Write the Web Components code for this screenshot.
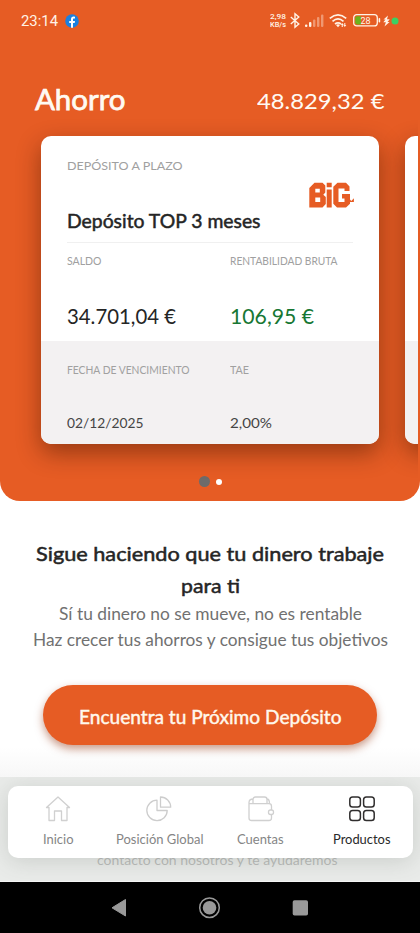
<!DOCTYPE html>
<html lang="es"><head><meta charset="utf-8"><title>Ahorro</title>
<style>
html,body{margin:0;padding:0;background:#fff}
body{width:420px;height:933px;overflow:hidden;font-family:Lato,"Open Sans",sans-serif;color:#252525}
</style></head><body>
<savings-app></savings-app>
<script>
const define=(name,html,after)=>{
  const t=document.createElement('template');t.innerHTML=html;
  customElements.define(name,class extends HTMLElement{
    connectedCallback(){
      if(this.shadowRoot)return;
      this.attachShadow({mode:'open'}).append(t.content.cloneNode(true));
      if(after)after(this,this.shadowRoot);
    }
  });
};

/* Single line of text: s = size, l = line height, w = set width, b = stroke weight */
define('fit-text',`<style>
:host{display:block;white-space:nowrap;width:max-content}
span{display:inline-block;transform-origin:0 50%}
</style><span><slot></slot></span>`,(el,r)=>{
  const a=n=>parseFloat(el.getAttribute(n));
  el.style.fontSize=a('s')+'px';el.style.lineHeight=a('l')+'px';el.style.height=a('l')+'px';
  if(el.hasAttribute('b'))el.style.webkitTextStroke=a('b')+'px currentColor';
  if(el.hasAttribute('w')){
    const sp=r.querySelector('span');
    sp.style.transform='scaleX('+a('w')/sp.getBoundingClientRect().width+')';
    el.style.width=a('w')+'px';
  }
});

define('status-bar',`<style>
:host{display:flex;height:40px;box-sizing:border-box;padding:1px 21px 0 21px;align-items:center;justify-content:space-between;color:#fff3e6;font-family:Roboto,sans-serif}
div{display:flex;align-items:center}
svg{display:block;overflow:visible}
.rate{margin-right:3px;text-align:center;font-weight:500}
</style>
<div><fit-text s="15" l="20" w="37">23:14</fit-text>
<svg style="margin-left:7px" width="14" height="14" viewBox="0 0 14 14"><circle cx="7" cy="7" r="6.800" fill="#1a80e0"/><path d="M6 13.800V9H4.200V7H6V5.400C6 3.500 7 2.600 8.600 2.600l1.400.1v1.700H9C8.200 4.400 8 4.800 8 5.500V7h2L9.700 9H8v4.800z" fill="#fff"/></svg></div>
<div>
<div class="rate" style="display:block"><fit-text s="8" l="7.500" w="16">2,98</fit-text><fit-text s="7.500" l="7.500" w="16">KB/s</fit-text></div>
<svg style="margin-left:1px" width="10" height="15" viewBox="0 0 10 15"><path d="M.8 4l8 7L5 14.300V.700L8.800 4l-8 7" fill="none" stroke="#fff3e6" stroke-width="1.400"/></svg>
<svg style="margin-left:5px" width="19" height="13" viewBox="0 0 19 13"><g fill="#fff3e6"><rect x="0" y="10.500" width="2.400" height="2.500" rx="1"/><rect x="4" y="8" width="2.400" height="5" rx="1"/><g opacity=".4"><rect x="8" y="5.500" width="2.400" height="7.500" rx="1"/><rect x="12" y="3" width="2.400" height="10" rx="1"/><rect x="16" y=".5" width="2.400" height="12.500" rx="1"/></g></g></svg>
<svg style="margin-left:5px" width="18" height="13" viewBox="0 0 18 13"><g fill="none" stroke="#fff3e6" stroke-width="1.700"><path d="M.8 4.300Q9-2.600 17.200 4.300M3.500 7.300Q9 2.600 14.500 7.300M6 10Q9 7.600 12 10"/></g><path d="M7 11q2-1.500 4 0L9 13.200zM13.200 9l1.600 2h-1v2h-1.100v-2h-1zm2.600 4l-1.500-2h1V9h1v2h1z" fill="#fff3e6"/></svg>
<svg style="margin-left:6px" width="28" height="13" viewBox="0 0 28 13"><rect x=".7" y=".7" width="23.600" height="11.200" rx="3" fill="none" stroke="#fff3e6" stroke-width="1.300"/><path d="M4 2.200h4v8.200H4A1.800 1.800 0 0 1 2.200 8.600V4A1.800 1.800 0 0 1 4 2.200z" fill="#6cb31c"/><rect x="25.600" y="4" width="1.600" height="4.500" rx=".8" fill="#fff3e6"/><text x="12.500" y="9.600" text-anchor="middle" font-size="9" font-family="Roboto" fill="#fff3e6">28</text></svg>
<svg style="margin-left:2px" width="7" height="12" viewBox="0 0 7 12"><path d="M5 .5L.5 4.500h2L.3 7.300h2.600L1.500 11.500 6.600 7H4.500l2.200-2.800H4z" fill="#fff3e6"/></svg>
<svg style="margin-left:1px" width="8" height="8" viewBox="0 0 8 8"><circle cx="4" cy="4" r="3.500" fill="#3bd163"/></svg>
</div>`);

define('bank-logo',`<style>:host{display:block;width:45px;height:26px}svg{display:block}</style>
<svg width="45" height="26" viewBox="0 0 45 26" fill="#e65c24"><path fill-rule="evenodd" d="M5.500 .8H13.500L16.300 3.500V10.500L14.300 12.700L16.800 15V22L13.500 25.500H.3V6zM6.300 6.800V10.500H10.800V6.800zM6.300 15.500V20H11.200V15.500z"/><path d="M17.700 .8h5v4.400h-5zM17.700 7.500h5V25.500h-5z"/><path d="M28.500 .8H37L40.500 4.500V9H35.500V6.500H29.500V20H35.500V16.500H33V12H41V17.500L42.300 19L44.900 16.300V20H41V21.800L37 25.500H28L24.300 21.800V4.800z"/></svg>`);

define('deposit-card',`<style>
:host{display:block;flex:none;width:338px;height:308px;border-radius:10px;background:#fff;box-shadow:0 9px 23px rgba(65,20,0,.48)}
.in{display:block;height:100%;border-radius:10px;overflow:hidden}
.head{display:flex;justify-content:space-between;margin:0 26px;height:106px;border-bottom:1px solid #f0f0f0}
.left{padding-top:22px;display:grid;gap:35px;align-content:start}
::slotted(bank-logo){margin-top:45.500px;margin-right:-1px}
.row{display:grid;grid-template-columns:163px 1fr;padding:0 26px;box-sizing:border-box}
.top{height:98px;padding-top:10.500px}.bottom{background:#f3f1f2;height:103px;padding-top:21.500px}
.cell{display:grid;align-content:start;gap:34px}.bottom .cell{gap:36.500px}
::slotted([slot^="l"]){color:#a0a0a0}
::slotted([slot=v2]){color:#177733}
::slotted([slot=v3]),::slotted([slot=v4]){color:#454545}
</style><div class="in"><div class="head"><div class="left"><slot name="l0"></slot><slot name="title"></slot></div><slot name="logo"></slot></div>
<div class="row top"><div class="cell"><slot name="l1"></slot><slot name="v1"></slot></div><div class="cell"><slot name="l2"></slot><slot name="v2"></slot></div></div>
<div class="row bottom"><div class="cell"><slot name="l3"></slot><slot name="v3"></slot></div><div class="cell"><slot name="l4"></slot><slot name="v4"></slot></div></div></div>`);

define('savings-hero',`<style>
:host{display:block;height:501px;background:#e65c24;border-radius:0 0 20px 20px;overflow:hidden}
.title{display:flex;justify-content:space-between;align-items:flex-start;padding:42px 36px 0 35px;height:54px;color:#fffaf2}
.amt{margin-top:2.500px}
.track{display:flex;gap:25.500px;padding-left:41px;width:378px;clip-path:inset(-30px 1px -60px 0)}
.dots{display:flex;align-items:center;justify-content:center;gap:6px;margin-top:32px;height:11px;padding-left:1px}
i{width:11px;height:11px;border-radius:50%;background:#6e6b6a}i+i{width:6px;height:6px;background:#fff}
</style><status-bar></status-bar>
<div class="title"><fit-text s="28.500" l="34" w="90.500" b=".75">Ahorro</fit-text><fit-text class="amt" s="22" l="32" w="127.500">48.829,32 €</fit-text></div>
<div class="track"><deposit-card>
<fit-text slot="l0" s="12.300" l="16" w="115.500">DEPÓSITO A PLAZO</fit-text>
<fit-text slot="title" s="19.500" l="24" w="193.500" b=".5">Depósito TOP 3 meses</fit-text><bank-logo slot="logo"></bank-logo>
<fit-text slot="l1" s="11" l="14" w="34.500">SALDO</fit-text><fit-text slot="v1" s="20.800" l="28" w="109">34.701,04 €</fit-text>
<fit-text slot="l2" s="11" l="14" w="107.500">RENTABILIDAD BRUTA</fit-text><fit-text slot="v2" s="20.800" l="28" w="84">106,95 €</fit-text>
<fit-text slot="l3" s="11" l="14" w="122.500">FECHA DE VENCIMIENTO</fit-text><fit-text slot="v3" s="14.300" l="20" w="76.500">02/12/2025</fit-text>
<fit-text slot="l4" s="11" l="14" w="19">TAE</fit-text><fit-text slot="v4" s="14.300" l="20" w="42">2,00%</fit-text>
</deposit-card><deposit-card></deposit-card></div>
<div class="dots"><i></i><i></i></div>`);

define('promo-panel',`<style>
:host{display:grid;justify-items:center;align-content:start;padding-top:40.500px;height:344.500px;color:#252525}
.sub{color:#717171}
button{all:unset;box-sizing:border-box;display:flex;align-items:center;justify-content:center;width:334px;height:60px;border-radius:30px;background:#e65c24;color:#fff8ec;margin-top:32px;padding-top:4px;box-shadow:0 4px 8px rgba(150,55,20,.5)}
.more{margin-top:102.500px;margin-left:14px;color:#6c6c6c}
</style>
<fit-text s="20" l="22" w="348" b=".5">Sigue haciendo que tu dinero trabaje</fit-text>
<fit-text style="margin-top:10px" s="20" l="22" w="59" b=".5">para ti</fit-text>
<fit-text style="margin-top:5.500px" class="sub" s="16.500" l="26" w="303">Sí tu dinero no se mueve, no es rentable</fit-text>
<fit-text class="sub" s="16.500" l="26" w="355">Haz crecer tus ahorros y consigue tus objetivos</fit-text>
<button><fit-text s="19" l="24" w="262.500" b=".45">Encuentra tu Próximo Depósito</fit-text></button>
<fit-text class="more" s="14" l="24" w="240.500">contacto con nosotros y te ayudaremos</fit-text>`);

define('nav-item',`<style>:host{display:grid;justify-items:center;align-content:start;padding-top:9px;gap:7.500px;color:#858585}
:host([active]){color:#292929}::slotted(svg){display:block;overflow:visible}</style><slot name="icon"></slot><slot></slot>`);

define('bottom-nav',`<style>
:host{display:block;position:absolute;left:0;right:0;bottom:51px;height:105px;overflow:hidden;background:rgba(222,225,222,.68);box-sizing:border-box;border-bottom:1px solid #f4f4f4}
nav{display:grid;grid-template-columns:repeat(4,101.250px);margin:9px 7.500px 0;width:405px;height:71.500px;border-radius:10px;background:#fff;box-shadow:0 3px 22px rgba(80,90,80,.2)}
</style><nav>
<nav-item><svg slot="icon" width="26" height="27" viewBox="0 0 26 27" fill="none" stroke="#d0d0d0" stroke-width="1.300" stroke-linejoin="round"><path d="M1.500 12.500L13 2 24.500 12.500H22V25.500H16.500V16H9.500V25.500H4V12.500z"/></svg><fit-text s="13" l="19" w="30.500">Inicio</fit-text></nav-item>
<nav-item><svg slot="icon" width="26" height="27" viewBox="0 0 26 27" fill="none" stroke="#cdcdcd" stroke-width="1.300" stroke-linejoin="round"><path d="M11 5.200A10.200 10.200 0 1 0 21.200 15.500H11zM14.500 2A10.200 10.200 0 0 1 24.700 12.200H14.500z"/></svg><fit-text s="13" l="19" w="87.500">Posición Global</fit-text></nav-item>
<nav-item><svg slot="icon" width="26" height="27" viewBox="0 0 26 27" fill="none" stroke="#d0d0d0" stroke-width="1.300" stroke-linejoin="round"><path d="M1 7.500V23q0 2.500 2.500 2.500H21q2.500 0 2.500-2.500V20M1 8.700H21q2.500 0 2.500 2.500V15M1 7.500Q1.200 4 5 4M5 8.500V4.500Q5 2 7.500 2H16.500Q19 2 19 4.500V8.500M19 4Q21.500 4 21.500 8.700"/><rect x="20.500" y="15" width="5" height="4.500" rx="2"/></svg><fit-text s="13" l="19" w="46.500">Cuentas</fit-text></nav-item>
<nav-item active><svg slot="icon" width="26" height="27" viewBox="0 0 26 27" fill="none" stroke="#302e2e" stroke-width="1.500"><rect x=".8" y="2" width="10.600" height="10" rx="2.800"/><rect x="14.600" y="2" width="10.600" height="10" rx="2.800"/><rect x=".8" y="15.500" width="10.600" height="10" rx="2.800"/><rect x="14.600" y="15.500" width="10.600" height="10" rx="2.800"/></svg><fit-text s="13" l="19" w="57.500">Productos</fit-text></nav-item>
</nav>`);

define('system-keys',`<style>:host{display:block;position:absolute;left:0;right:0;bottom:0;height:51px;background:#000}svg{display:block}</style>
<svg width="420" height="51" viewBox="0 0 420 51"><path d="M125.500 17.500V34L112 25.800z" fill="#999" stroke="#999" stroke-linejoin="round"/><circle cx="209.500" cy="25.700" r="9.800" fill="none" stroke="#999" stroke-width="1.500"/><circle cx="209.500" cy="25.700" r="6.800" fill="#999"/><rect x="292.700" y="18.200" width="15.300" height="15.300" rx="1.800" fill="#999"/></svg>`);

define('savings-app',`<style>:host{display:block;position:relative;width:420px;height:933px;overflow:hidden;background:#fff}
.fade{position:absolute;left:0;right:0;top:747px;height:30px;background:linear-gradient(rgba(120,120,120,0),rgba(120,120,120,.06))}</style>
<savings-hero></savings-hero><promo-panel></promo-panel><div class="fade"></div><bottom-nav></bottom-nav><system-keys></system-keys>`);
</script></body></html>
